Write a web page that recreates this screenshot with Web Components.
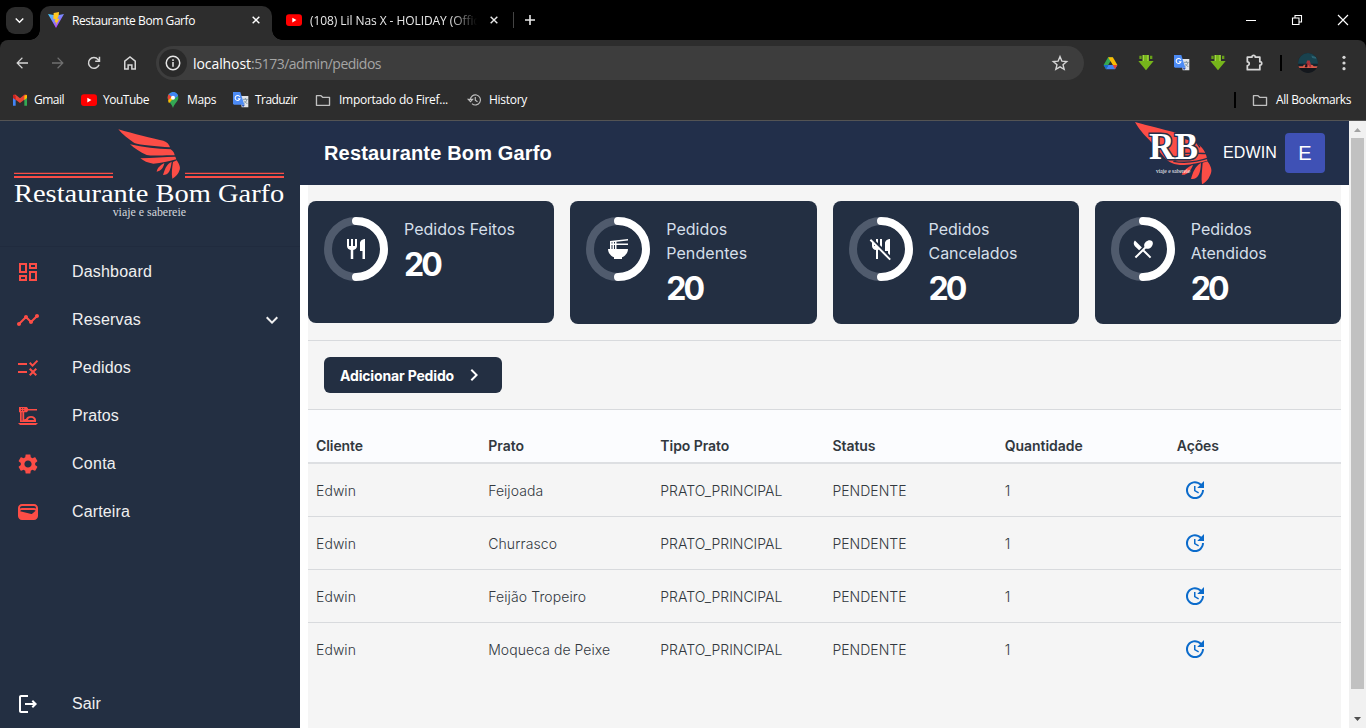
<!DOCTYPE html>
<html lang="pt-BR">
<head>
<meta charset="utf-8">
<title>Restaurante Bom Garfo</title>
<style>
html,body{margin:0;height:100%;overflow:hidden;background:#fff}
body{font-family:"Liberation Sans",Arial,sans-serif}
</style>
</head>
<body>
<app-window></app-window>
<script>
const ICONS = {
  dashboard:'<path d="M19 5v2h-4V5h4M9 5v6H5V5h4m10 8v6h-4v-6h4M9 17v2H5v-2h4M21 3h-8v6h8V3zM11 3H3v10h8V3zm10 8h-8v10h8V11zm-10 4H3v6h8v-6z"/>',
  timeline:'<path d="M23 8c0 1.1-.9 2-2 2-.18 0-.35-.02-.51-.07l-3.56 3.55c.05.16.07.34.07.52 0 1.1-.9 2-2 2s-2-.9-2-2c0-.18.02-.36.07-.52l-2.55-2.55c-.16.05-.34.07-.52.07s-.36-.02-.52-.07l-4.55 4.56c.05.16.07.33.07.51 0 1.1-.9 2-2 2s-2-.9-2-2 .9-2 2-2c.18 0 .35.02.51.07l4.56-4.55C8.02 9.36 8 9.18 8 9c0-1.1.9-2 2-2s2 .9 2 2c0 .18-.02.36-.07.52l2.55 2.55c.16-.05.34-.07.52-.07s.36.02.52.07l3.55-3.56C19.02 8.35 19 8.18 19 8c0-1.1.9-2 2-2s2 .9 2 2z"/>',
  rule:'<path d="M16.54 11L13 7.46l1.41-1.41 2.12 2.12 4.24-4.24 1.41 1.41L16.54 11zM11 7H2v2h9V7zm10 6.41L19.59 12 17 14.59 14.41 12 13 13.41 15.59 16 13 18.59 14.41 20 17 17.41 19.59 20 21 18.59 18.41 16 21 13.41zM11 15H2v2h9v-2z"/>',
  dinner:'<path fill-rule="evenodd" d="M2 19h20l-2 2H4l-2-2zM3 3h7c1 0 1.800.7 2 1.500V5h9v1.500h-9C11.800 7.500 11 8.300 10 8.300H8.200V15.500c.5-.3 1-.4 1.700-.4.8-2 2.600-3.200 5.100-3.200 3 0 5 1.700 5 4.100v2H4V8.300H3zM5 4.300v.7h1v-.7zM7.200 4.300v.7h1v-.7zM5 6.200v.7h1v-.7zM7.200 6.200v.7h1v-.7zM5.700 8.300v8.200h.7V8.300zM12 16h6c-.3-1.500-1.500-2.300-3-2.300s-2.700.8-3 2.300z"/>',
  settings:'<path d="M19.14 12.94c.04-.3.06-.61.06-.94 0-.32-.02-.64-.07-.94l2.03-1.58c.18-.14.23-.41.12-.61l-1.92-3.32c-.12-.22-.37-.29-.59-.22l-2.39.96c-.5-.38-1.03-.7-1.62-.94l-.36-2.54c-.04-.24-.24-.41-.48-.41h-3.84c-.24 0-.43.17-.47.41l-.36 2.54c-.59.24-1.13.57-1.62.94l-2.39-.96c-.22-.08-.47 0-.59.22L2.74 8.87c-.12.21-.08.47.12.61l2.03 1.58c-.05.3-.09.63-.09.94s.02.64.07.94l-2.03 1.58c-.18.14-.23.41-.12.61l1.92 3.32c.12.22.37.29.59.22l2.39-.96c.5.38 1.03.7 1.62.94l.36 2.54c.05.24.24.41.48.41h3.84c.24 0 .44-.17.47-.41l.36-2.54c.59-.24 1.13-.56 1.62-.94l2.39.96c.22.08.47 0 .59-.22l1.92-3.32c.12-.22.07-.47-.12-.61l-2.01-1.58zM12 15.6c-1.98 0-3.6-1.62-3.6-3.6s1.62-3.6 3.6-3.6 3.6 1.62 3.6 3.6-1.62 3.6-3.6 3.6z"/>',
  wallet:'<path d="M18 4H6C3.79 4 2 5.79 2 8v8c0 2.21 1.79 4 4 4h12c2.21 0 4-1.79 4-4V8c0-2.21-1.79-4-4-4zm-1.860 9.770c-.24.2-.57.28-.88.2L4.15 11.250C4.450 10.520 5.160 10 6 10h12c.67 0 1.260.34 1.630.84l-3.490 2.930zM6 6h12c1.100 0 2 .9 2 2v.55c-.59-.34-1.270-.55-2-.55H6c-.73 0-1.410.21-2 .55V8c0-1.100.9-2 2-2z"/>',
  logout:'<path d="M17 8l-1.41 1.41L17.17 11H9v2h8.17l-1.58 1.58L17 16l4-4-4-4zM5 5h7V3H5c-1.100 0-2 .9-2 2v14c0 1.100.9 2 2 2h7v-2H5V5z"/>',
  down:'<path d="M7.41 8.59 12 13.17l4.59-4.58L18 10l-6 6-6-6z"/>',
  right:'<path d="M8.59 16.59 13.17 12 8.59 7.41 10 6l6 6-6 6z"/>',
  update:'<path d="M21 10.12h-6.78l2.74-2.82c-2.73-2.7-7.15-2.8-9.88-.1-2.73 2.71-2.73 7.08 0 9.79s7.15 2.71 9.88 0C18.32 15.65 19 14.08 19 12.1h2c0 1.98-.88 4.55-2.64 6.29-3.51 3.48-9.21 3.48-12.72 0-3.5-3.47-3.53-9.11-.02-12.58s9.14-3.47 12.65 0L21 3v7.12zM12.5 8v4.25l3.5 2.08-.72 1.21L11 13V8h1.5z"/>',
  restaurant:'<path d="M11 9H9V2H7v7H5V2H3v7c0 2.12 1.66 3.84 3.75 3.97V22h2.5v-9.030C11.340 12.840 13 11.120 13 9V2h-2v7zm5-3v8h2.5v8H21V2c-2.760 0-5 2.240-5 4z"/>',
  ramen:'<path d="M22 3.510V2L4 3.990V12H2c0 3.690 2.470 6.860 6 8.250V22h8v-1.750c3.530-1.390 6-4.560 6-8.250H10.500V8H22V6.500H10.500V4.780L22 3.510zM6.500 5.220V6.500h-1V5.340l1-.12zM5.500 8h1v4h-1V8zM9 12H8V8h1v4zm0-5.500H8V5.060l1-.11V6.500z"/>',
  nomeals:'<path d="M16 14V6c0-1.760 2.240-4 5-4v16.170l-2-2V14h-3zm4.490 9.310L10.020 12.850c-.3.1-.65.15-1.020.15v9H7v-9c-2.210 0-4-1.790-4-4V5.830L.69 3.510 2.100 2.100l19.800 19.800-1.410 1.410zM6.170 9 5 7.830V9h1.170zM9 2H7v2.170l2 2V2zm4 7V2h-2v6.170l1.850 1.850c.1-.32.15-.66.15-1.020z"/>',
  menu:'<path d="M8.100 13.340l2.830-2.830L3.910 3.500c-1.560 1.560-1.560 4.090 0 5.660l4.190 4.180zm6.780-1.810c1.530.71 3.680.21 5.270-1.380 1.910-1.910 2.280-4.650.81-6.120-1.460-1.460-4.200-1.100-6.120.81-1.590 1.590-2.090 3.740-1.380 5.270L3.700 19.870l1.410 1.410L12 14.410l6.880 6.880 1.410-1.410L13.410 13l1.470-1.470z"/>',
  back:'<path d="M20 11.100H7.700l5.300-5.300L12 4.400 4.400 12l7.600 7.600 1.100-1.300-5.400-5.400H20z"/>',
  forward:'<path d="M4 11.100h12.300L11 5.800l1-1.400 7.600 7.600-7.600 7.600-1.100-1.300 5.400-5.400H4z"/>',
  reload:'<path d="M18.700 14.200A7.200 7.200 0 1 1 17.400 7.200L19 8.800" fill="none" stroke="currentColor" stroke-width="2"/><path d="M20.300 3.800v6.700h-6.700v-2h4.700V3.800z"/>',
  home:'<path d="M5 20V9.500L12 4l7 5.500V20h-4.500v-5.500h-5V20z" fill="none" stroke="currentColor" stroke-width="2"/>',
  info:'<circle cx="12" cy="12" r="9" fill="none" stroke="currentColor" stroke-width="2"/><path d="M11 10.700h2V17h-2zM11 7h2v2.200h-2z"/>',
  star:'<path d="M12 3.500l2.500 6 6.500.5-5 4.200 1.600 6.300-5.600-3.400-5.600 3.400L8 14.200 3 10l6.500-.5z" fill="none" stroke="currentColor" stroke-width="1.800"/>',
  folder:'<path d="M2.200 18.500v-13h6.800l2.500 2.500h10.300v12H2.200z" fill="none" stroke="currentColor" stroke-width="2" stroke-linejoin="round"/>',
  history:'<path d="M4 12a8.700 8.700 0 1 1 2.800 6.300M.5 11h7.500l-3.700 4z" fill="none" stroke="currentColor" stroke-width="2"/><path d="M12.500 7v5.500l3.800 2.500" fill="none" stroke="currentColor" stroke-width="2"/>',
  puzzle:'<path d="M4 5h5.500c-.5-3 4.500-3 4 0H19v5.500c3-.5 3 4.500 0 4V20H4v-5c3 .3 3-4.500 0-4.300z" fill="none" stroke="currentColor" stroke-width="2.100" stroke-linejoin="round"/>',
  dots:'<circle cx="12" cy="3.500" r="2.400"/><circle cx="12" cy="12" r="2.400"/><circle cx="12" cy="20.500" r="2.400"/>',
  close:'<path d="M4 4l16 16M20 4L4 20" stroke="currentColor" stroke-width="3.400" fill="none"/>',
  winclose:'<path d="M2 2l20 20M22 2L2 22" stroke="currentColor" stroke-width="2.300" fill="none"/>',
  restore:'<path d="M3 8h13v13H3zM8 8V3h13v13h-5" stroke="currentColor" stroke-width="2.200" fill="none"/>',
  plus:'<path d="M12 2v20M2 12h20" stroke="currentColor" stroke-width="3.200" fill="none"/>',
  youtube:'<rect x="0" y="3.500" width="24" height="17.500" rx="4.500" fill="#f00"/><path d="M9.500 8.500v7.200l6.200-3.600z" fill="#fff"/>',
  vite:'<defs><linearGradient id="a" x1="0" y1="0" x2=".7" y2="1"><stop offset="0" stop-color="#41d1ff"/><stop offset="1" stop-color="#bd34fe"/></linearGradient></defs><path d="M0 3l12 21L24 3l-11.500 2.200z" fill="url(#a)"/><path d="M16.500 0L8.500 1.500 8 11l3-.6-.9 5.300 2.500-.8-1.200 5.600 5.900-10.700-3.200.6 2-5.600z" fill="#ffc71f"/>',
  gmail:'<path d="M1.500 20.500h4V10L1.500 7z" fill="#4285f4"/><path d="M18.500 20.500h4V7l-4 3z" fill="#34a853"/><path d="M1.500 4.500v4.300L12 16.600l10.500-7.800V4.500L19 3.600l-7 5.600-7-5.600z" fill="#ea4335"/><path d="M18.500 6v6l4-3V5l-1.500-1z" fill="#fbbc04"/><path d="M1.500 5v4l4 3V6L3 4z" fill="#c5221f"/>',
  maps:'<path d="M12 0a8 8 0 0 0-8 8.500C4 14 10 17 12 24c2-7 8-10 8-15.500A8 8 0 0 0 12 0z" fill="#34a853"/><path d="M5 4.500l5.500 5L19.700 6A8 8 0 0 0 5 4.500z" fill="#4285f4"/><path d="M5.600 3.500L12 9l-4.500 5.500C5 12 4 10 4 8.500c0-2 .5-3.500 1.600-5z" fill="#ea4335"/><path d="M13 9l-7 8-1.500-4L11 6z" fill="#fbbc04"/><path d="M10 .3a8 8 0 0 1 9.500 5.200L13.500 11z" fill="#4285f4"/><circle cx="12" cy="8.500" r="3" fill="#fff"/>',
  translate:'<path d="M11 6h12v17H13z" fill="#e3e5e8"/><path d="M15 11h7M18.500 9v2M21 11c-1 4-3 5-5 6.500M16.500 13l5 5" stroke="#78909c" stroke-width="1.300" fill="none"/><path d="M13 19h5l-3 4z" fill="#3056b5"/><path d="M0 0h11l6 19H2a2 2 0 0 1-2-2z" fill="#4c8bf5"/><path d="M10.200 7.200A3.700 3.700 0 1 0 10.500 10H7.300" stroke="#fff" stroke-width="1.600" fill="none"/>',
  drive:'<path d="M8.200 2h7.600L12 8.500 4.800 21 1 14.500z" fill="#34a853"/><path d="M8.200 2h7.600L23 14.500h-7.500z" fill="#fbbc04"/><path d="M8.500 14.500H23L19.200 21H4.800z" fill="#4285f4"/><path d="M1 14.500h7.500L4.800 21z" fill="#1967d2"/><path d="M15.500 14.500H23L19.200 21z" fill="#ea4335"/><path d="M12 8.700l3.400 5.800H8.600z" fill="#2d2d2d"/>',
  download:'<path d="M7 0h9v9h7.500L12 23 .5 9H7z" fill="#76b51b"/><path d="M2 1h3.500v5H2zM18 1h3.500v5H18z" fill="#67a018"/><path d="M7 0h2v9H7zM14 0h2v9h-2z" fill="#a1d542"/>',
  profile:'<defs><clipPath id="p"><circle cx="12" cy="12" r="12"/></clipPath></defs><g clip-path="url(#p)"><path d="M0 0h24v24H0z" fill="#15232c"/><path d="M0 0h24v13H0z" fill="#19424e"/><path d="M16 3l6 2v2l-5-1z" fill="#2d6472"/><path d="M0 16h6l1-2h10l2 2h5v2H0z" fill="#da5a49"/><path d="M10 12l1-3h3l1 3 1 5h-2l-1.500-3L11 17H9z" fill="#a8333a"/><path d="M9 14l2-2v5H8z" fill="#25141b"/><path d="M0 18h24v6H0z" fill="#14171c"/></g>'
};
const WING = '<path d="M355 28C400 41 457 56 490 62C502 66 508 74 510 82C470 79 420 75 403 69C385 57 367 43 355 28Z"/><path d="M390 73C430 83 470 86 512 88C520 94 524 101 524 106C490 105 460 109 440 105C421 98 403 84 390 73Z"/><path d="M421 115C460 113 495 111 526 110L529 118C505 124 485 129 460 131C443 129 431 123 421 115Z"/><path d="M493 129C480 136 471 145 470 155C482 153 490 145 493 129Z"/><path d="M515 125C501 132 496 142 489 165C506 165 512 151 515 125Z"/><path d="M519 126L530 121C537 131 542 142 539 149C535 162 528 169 517 176C514 161 516 144 519 126Z"/>';

const define = (name, html, setup) => {
  const tpl = document.createElement('template');
  tpl.innerHTML = html;
  customElements.define(name, class extends HTMLElement {
    constructor(){ super(); this.attachShadow({mode:'open'}); }
    connectedCallback(){
      if (this.shadowRoot.childNodes.length) return;
      this.shadowRoot.append(tpl.content.cloneNode(true));
      if (setup) setup(this, this.shadowRoot);
    }
  });
};

define('ui-icon','<style>:host{display:inline-flex;flex:none}svg{display:block;overflow:visible;fill:currentColor}</style>',(el,root)=>{
  const s = el.getAttribute('size') || 24;
  root.innerHTML += `<svg viewBox="0 0 24 24" width="${s}" height="${s}">${ICONS[el.getAttribute('name')]}</svg>`;
});

define('tab-strip',`<style>
:host{display:flex;height:40px;background:#000;color:#e8e8e8;font:12px "Open Sans","Noto Sans",sans-serif}
.search{width:27px;height:27px;margin:7px 7px 0 6px;border-radius:9px;background:#2d2d2d;display:grid;place-items:center;color:#fff}
.tab{display:flex;align-items:center;box-sizing:border-box;height:34px;margin-top:6px;padding-bottom:6px}
.active{position:relative;width:232px;background:#2d2d2d;border-radius:10px 10px 0 0;padding-left:8px;color:#fff}
.active:before,.active:after{content:"";position:absolute;bottom:0;width:10px;height:10px}
.active:before{left:-10px;background:radial-gradient(circle at 0 0,transparent 9.500px,#2d2d2d 10px)}
.active:after{right:-10px;background:radial-gradient(circle at 100% 0,transparent 9.500px,#2d2d2d 10px)}
.t{margin-left:8px}.x{margin-left:56px}
.second{padding-left:14px;width:227px}
.fade{width:167px;overflow:hidden;-webkit-mask:linear-gradient(90deg,#000 84%,transparent)}
.sep{width:1px;height:16px;margin:12px 10px 0 0;background:#444}
.ctl{margin-left:auto;display:flex;height:40px;align-items:center;color:#fff}
.ctl>*{width:46px;display:flex;justify-content:center}
.min{height:1px;width:10px;background:#fff;flex:none}
</style>
<div class="search"><ui-icon name="down" size="17"></ui-icon></div>
<div class="tab active"><ui-icon name="vite" size="16"></ui-icon><fit-text class="t" w="123">Restaurante Bom Garfo</fit-text><ui-icon class="x" name="close" size="10"></ui-icon></div>
<div class="tab second"><ui-icon name="youtube" size="16"></ui-icon><div class="t fade"><fit-text w="169">(108) Lil Nas X - HOLIDAY (Offic</fit-text></div><ui-icon style="margin-left:12px" name="close" size="10"></ui-icon></div>
<div class="sep" style="margin-left:14px"></div><div class="tab"><ui-icon name="plus" size="12"></ui-icon></div>
<div class="ctl"><div><i class="min"></i></div><div><ui-icon name="restore" size="12"></ui-icon></div><div><ui-icon name="winclose" size="12"></ui-icon></div></div>`);

define('tool-bar',`<style>
:host{display:flex;align-items:center;height:46px;background:#2d2d2d;color:#d6d6d6;padding-left:4px;box-sizing:border-box;border-radius:8px 8px 0 0;font:14px "Open Sans","Noto Sans",sans-serif}
.b{width:36px;display:flex;justify-content:center;flex:none}
.omni{margin:0 8px;width:928px;height:34px;border-radius:17px;background:#3d3d3d;display:flex;align-items:center;box-sizing:border-box;padding:0 15px 0 3px}
.i{width:28px;height:28px;border-radius:50%;background:#2a2a2a;display:grid;place-items:center;margin-right:6px;color:#e6e6e6}
.h{color:#fff}.p{color:#a5a5a5;margin-right:auto}
.sep{width:2px;height:16px;background:#000;margin:0 8px 0 8px}
</style>
<div class="b"><ui-icon name="back" size="18"></ui-icon></div><div class="b" style="color:#707070"><ui-icon name="forward" size="18"></ui-icon></div><div class="b"><ui-icon name="reload" size="18"></ui-icon></div><div class="b"><ui-icon name="home" size="18"></ui-icon></div>
<div class="omni"><div class="i"><ui-icon name="info" size="18"></ui-icon></div><fit-text class="h" w="58">localhost</fit-text><fit-text class="p" w="130">:5173/admin/pedidos</fit-text><ui-icon name="star" size="18"></ui-icon></div>
<div class="b"><ui-icon name="drive" size="15"></ui-icon></div><div class="b"><ui-icon name="download" size="16"></ui-icon></div><div class="b"><ui-icon name="translate" size="16"></ui-icon></div><div class="b"><ui-icon name="download" size="16"></ui-icon></div><div class="b"><ui-icon name="puzzle" size="20"></ui-icon></div>
<i class="sep"></i><div class="b"><ui-icon name="profile" size="20"></ui-icon></div><div class="b"><ui-icon name="dots" size="16"></ui-icon></div>`);

define('bookmark-bar',`<style>
:host{display:flex;align-items:center;height:35px;box-sizing:border-box;padding:0 15px 6px 12px;background:#2d2d2d;border-bottom:1px solid #545454;color:#fff;font:12px/16px "Open Sans","Noto Sans",sans-serif}
.k{display:flex;align-items:center;gap:6px}.g{color:#c0c0c0}
fit-text{padding-bottom:1px}
.sep{width:2px;height:16px;background:#000;margin:0 16px 0 auto}
</style>
<div class="k"><ui-icon name="gmail" size="16"></ui-icon><fit-text w="30">Gmail</fit-text></div>
<div class="k" style="margin-left:17px"><ui-icon name="youtube" size="16"></ui-icon><fit-text w="46">YouTube</fit-text></div>
<div class="k" style="margin-left:16px"><ui-icon name="maps" size="16"></ui-icon><fit-text w="29">Maps</fit-text></div>
<div class="k" style="margin-left:17px"><ui-icon name="translate" size="16"></ui-icon><fit-text w="42">Traduzir</fit-text></div>
<div class="k" style="margin-left:18px;gap:8px"><ui-icon class="g" name="folder" size="16"></ui-icon><fit-text w="109">Importado do Firef...</fit-text></div>
<div class="k" style="margin-left:20px;gap:7px"><ui-icon class="g" name="history" size="14"></ui-icon><fit-text w="38">History</fit-text></div>
<i class="sep"></i><div class="k" style="gap:8px"><ui-icon class="g" name="folder" size="16"></ui-icon><fit-text w="75">All Bookmarks</fit-text></div>`);

define('nav-item',`<style>
:host{display:flex;align-items:center;height:48px;padding:0 16px;color:#f0f0f0;font-size:16px;line-height:18px}
.ic{color:var(--nav-icon,#fc4d46);margin-right:32px;padding-top:1px;display:flex}
.tx{padding-top:2px;display:flex}
</style><span class="ic"></span><span class="tx"><slot></slot></span><slot name="more"></slot>`,(el,root)=>{
  root.querySelector('.ic').innerHTML = `<ui-icon name="${el.getAttribute('icon')}"></ui-icon>`;
});

define('side-bar',`<style>
:host{display:flex;flex-direction:column;width:300px;height:100%;flex:none;background:#232f42;box-sizing:border-box;padding-bottom:1px}
.logo{display:block;height:126px;box-shadow:inset 0 -1px #202b3e;flex:none}
text{font-family:"Liberation Serif",serif;fill:#fff}
.end{margin-top:auto;--nav-icon:#fff}
.more{margin-left:auto;padding-top:1px}
</style>
<svg class="logo" width="300" height="126" viewBox="0 3 900 378"><g fill="#fc4d46">${WING}<path d="M42 158h297v4H42zM42 168h297v6H42zM555 158h297v4H555zM555 168h297v6H555z"/></g>
<text x="42" y="246" font-size="77" textLength="811" lengthAdjust="spacingAndGlyphs">Restaurante Bom Garfo</text>
<text x="338" y="287" font-size="37" textLength="220" lengthAdjust="spacingAndGlyphs" style="fill:#d5d8dd">viaje e sabereie</text></svg>
<nav-item icon="dashboard"><fit-text w="80">Dashboard</fit-text></nav-item>
<nav-item icon="timeline"><fit-text w="69">Reservas</fit-text><ui-icon slot="more" class="more" name="down"></ui-icon></nav-item>
<nav-item icon="rule"><fit-text w="59">Pedidos</fit-text></nav-item>
<nav-item icon="dinner"><fit-text w="47">Pratos</fit-text></nav-item>
<nav-item icon="settings"><fit-text w="44">Conta</fit-text></nav-item>
<nav-item icon="wallet"><fit-text w="58">Carteira</fit-text></nav-item>
<nav-item class="end" icon="logout"><fit-text w="29">Sair</fit-text></nav-item>`);

define('page-header',`<style>
:host{display:flex;align-items:center;height:64px;flex:none;background:#222f4a;color:#fff;padding:0 24px;box-sizing:border-box}
h1{margin:0 auto 0 0;font-size:20px;font-weight:700;line-height:24px}
svg{display:block;flex:none;margin-right:9px}
text{font-family:"Liberation Serif",serif;fill:#fff}
.n{font-size:16px}
.av{width:40px;height:40px;border-radius:4px;background:#3f51b5;display:grid;place-items:center;font-size:20px;margin-left:8px}
</style>
<h1><fit-text w="228">Restaurante Bom Garfo</fit-text></h1>
<svg width="80" height="64" viewBox="102 9 240 192"><g fill="#fc4d46"><path d="M105 12C150 25 190 34 220 42C235 45 243 50 248 60C270 70 290 72 297 80C312 94 320 108 322 128C290 136 260 142 240 141C215 139 200 128 190 115L148 66C130 48 118 35 105 12Z"/><path d="M279 140C262 147 250 158 245 170C258 174 274 158 279 140ZM303 135C285 144 278 165 273 183C292 186 302 170 303 135ZM308 134L322 130C332 142 337 156 333 165C327 181 322 190 306 199C303 180 306 160 308 134Z"/></g>
<path d="M240 108C270 103 300 106 321 107M220 130C260 137 300 129 329 119M282 62L300 88" stroke="#222f4a" stroke-width="4" fill="none"/>
<text x="147" y="123" font-size="114" font-weight="700" textLength="147" lengthAdjust="spacingAndGlyphs" stroke="#222f4a" stroke-width="9" paint-order="stroke">RB</text>
<text x="168" y="164" font-size="19" textLength="103" lengthAdjust="spacingAndGlyphs">viaje e sabereie</text></svg>
<fit-text class="n" w="54">EDWIN</fit-text><div class="av">E</div>`);

define('stat-card',`<style>
:host{display:flex;gap:16px;padding:16px;border-radius:8px;background:#232f42;box-sizing:border-box;height:122.500px;font-family:Inter,sans-serif;color:#fff}
:host(:first-child){height:122px}
.ring{width:64px;height:64px;display:grid;flex:none}
.ring>*{grid-area:1/1;place-self:center}
.l{font-size:16px;line-height:24px;color:#d5dfe9}
.v{font-size:32px;font-weight:700;line-height:40px;margin-top:4px}
</style>
<div class="ring"><svg width="64" height="64"><g fill="none" stroke-width="8"><circle cx="32" cy="32" r="28" stroke="#505b6d"/><path d="M32 4a28 28 0 0 1 0 56" stroke="#fff" stroke-linecap="round"/></g></svg><span class="ic" style="display:flex"></span></div>
<div><div class="l"><slot></slot></div><div class="v"><fit-text w="36">20</fit-text></div></div>`,(el,root)=>{
  root.querySelector('.ic').innerHTML = `<ui-icon name="${el.getAttribute('icon')}"></ui-icon>`;
});

define('action-button',`<style>
:host{display:flex;align-items:center;width:178px;height:36px;box-sizing:border-box;padding:0 16px;border-radius:6px;background:#232f42;color:#fff;font:700 14px Inter,sans-serif}
.t{padding-top:1px}ui-icon{margin-left:8px}
</style><span class="t"><slot></slot></span><ui-icon name="right"></ui-icon>`);

define('order-row',`<style>
:host{display:grid;grid-template-columns:repeat(6,1fr);height:53px;box-sizing:border-box;border-bottom:1px solid #d8dadd;align-items:center;color:#32383e;font:300 14px/20px Inter,sans-serif}
:host(:last-child){border-color:transparent}
div{padding:2px 8px 0}
ui-icon{color:#0b6bcb;padding:0 0 3px 6px}
</style><div><fit-text w="40">Edwin</fit-text></div><div><slot></slot></div><div><fit-text w="122">PRATO_PRINCIPAL</fit-text></div><div><fit-text w="74">PENDENTE</fit-text></div><div>1</div><div style="padding-top:0;height:24px"><ui-icon name="update" size="24"></ui-icon></div>`);

define('orders-table',`<style>
:host{display:block}
.h{display:grid;grid-template-columns:repeat(6,1fr);height:54px;box-sizing:border-box;background:#fbfcfe;border-bottom:2px solid #dddfe2;color:#32383e;font:600 14px/20px Inter,sans-serif;padding-top:26px}
.h div{padding:0 8px}
</style>
<div class="h"><div><fit-text w="47">Cliente</fit-text></div><div><fit-text w="36">Prato</fit-text></div><div><fit-text w="69">Tipo Prato</fit-text></div><div><fit-text w="43">Status</fit-text></div><div><fit-text w="78">Quantidade</fit-text></div><div><fit-text w="42">Ações</fit-text></div></div>
<order-row><fit-text w="55">Feijoada</fit-text></order-row><order-row><fit-text w="69">Churrasco</fit-text></order-row><order-row><fit-text w="98">Feijão Tropeiro</fit-text></order-row><order-row><fit-text w="122">Moqueca de Peixe</fit-text></order-row>`);

define('scroll-bar',`<style>
:host{display:flex;flex-direction:column;width:17px;background:#f1f1f1;flex:none;align-items:center}
svg{flex:none;display:block}
.thumb{width:13px;height:551px;background:#c1c1c1}
</style><svg width="17" height="17"><path d="M5 11h7L8.500 7z" fill="#a3a3a3"/></svg><div class="thumb"></div><svg width="17" height="17" style="margin-top:auto"><path d="M5 6h7L8.500 10z" fill="#505050"/></svg>`);

define('app-window',`<style>
:host{display:flex;flex-direction:column;height:728px;width:1366px;background:#000;overflow:hidden}
.page{display:flex;height:607px;background:#fff}
.main{flex:1;min-width:0;display:flex;flex-direction:column}
.content{flex:1;margin:0 8px;background:#f5f5f5;padding-top:16px}
.cards{display:grid;grid-template-columns:repeat(4,1fr);gap:16px}
.bar{margin-top:16.500px;border:1px solid #d8dadd;border-width:1px 0;padding:16px}
</style>
<tab-strip></tab-strip><tool-bar></tool-bar><bookmark-bar></bookmark-bar>
<div class="page"><side-bar></side-bar><div class="main"><page-header></page-header><div class="content">
<div class="cards"><stat-card icon="restaurant"><fit-text w="111">Pedidos Feitos</fit-text></stat-card>
<stat-card icon="ramen"><fit-text w="61">Pedidos</fit-text><br><fit-text w="81">Pendentes</fit-text></stat-card>
<stat-card icon="nomeals"><fit-text w="61">Pedidos</fit-text><br><fit-text w="89">Cancelados</fit-text></stat-card>
<stat-card icon="menu"><fit-text w="61">Pedidos</fit-text><br><fit-text w="76">Atendidos</fit-text></stat-card></div>
<div class="bar"><action-button><fit-text w="114">Adicionar Pedido</fit-text></action-button></div>
<orders-table></orders-table></div></div><scroll-bar></scroll-bar></div>`);

/* Sets its text to a given width by spreading the difference over the letters. */
define('fit-text','<style>:host{display:inline-block;white-space:pre;vertical-align:top}span{display:inline-block;vertical-align:top}</style><span><slot></slot></span>',(el,root)=>{
  const w = +el.getAttribute('w'), span = root.querySelector('span');
  const natural = span.getBoundingClientRect().width;
  span.style.letterSpacing = (w - natural) / el.textContent.length + 'px';
  el.style.width = w + 'px';
});
</script>
</body>
</html>
